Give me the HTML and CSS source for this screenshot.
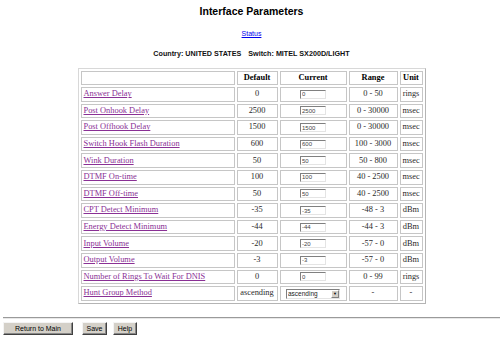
FILE: index.html
```html
<!DOCTYPE html>
<html lang="en">
<head>
  <meta charset="UTF-8">
  <title>Interface Parameters</title>
  <link rel="stylesheet" href="styles.css">
</head>
<body>

  <h1 class="titulo">Interface Parameters</h1>
  <p class="status"><a href="#">Status</a></p>
  <p class="pais"><span>Country: UNITED STATES</span><span class="switch">Switch: MITEL SX200D/LIGHT</span></p>

  <!-- Tabela de parametros -->
  <table class="params">
    <colgroup>
      <col class="c-nome"><col class="c-def"><col class="c-cur"><col class="c-range"><col class="c-unit">
    </colgroup>
    <tr class="cab">
      <td></td><th>Default</th><th>Current</th><th>Range</th><th>Unit</th>
    </tr>
    <tr><td class="nome"><a href="#">Answer Delay</a></td><td>0</td><td><input type="text" value="0"></td><td>0 - 50</td><td>rings</td></tr>
    <tr><td class="nome"><a href="#">Post Onhook Delay</a></td><td>2500</td><td><input type="text" value="2500"></td><td>0 - 30000</td><td>msec</td></tr>
    <tr><td class="nome"><a href="#">Post Offhook Delay</a></td><td>1500</td><td><input type="text" value="1500"></td><td>0 - 30000</td><td>msec</td></tr>
    <tr><td class="nome"><a href="#">Switch Hook Flash Duration</a></td><td>600</td><td><input type="text" value="600"></td><td>100 - 3000</td><td>msec</td></tr>
    <tr><td class="nome"><a href="#">Wink Duration</a></td><td>50</td><td><input type="text" value="50"></td><td>50 - 800</td><td>msec</td></tr>
    <tr><td class="nome"><a href="#">DTMF On-time</a></td><td>100</td><td><input type="text" value="100"></td><td>40 - 2500</td><td>msec</td></tr>
    <tr><td class="nome"><a href="#">DTMF Off-time</a></td><td>50</td><td><input type="text" value="50"></td><td>40 - 2500</td><td>msec</td></tr>
    <tr><td class="nome"><a href="#">CPT Detect Minimum</a></td><td>-35</td><td><input type="text" value="-35"></td><td>-48 - 3</td><td>dBm</td></tr>
    <tr><td class="nome"><a href="#">Energy Detect Minimum</a></td><td>-44</td><td><input type="text" value="-44"></td><td>-44 - 3</td><td>dBm</td></tr>
    <tr><td class="nome"><a href="#">Input Volume</a></td><td>-20</td><td><input type="text" value="-20"></td><td>-57 - 0</td><td>dBm</td></tr>
    <tr><td class="nome"><a href="#">Output Volume</a></td><td>-3</td><td><input type="text" value="-3"></td><td>-57 - 0</td><td>dBm</td></tr>
    <tr><td class="nome"><a href="#">Number of Rings To Wait For DNIS</a></td><td>0</td><td><input type="text" value="0"></td><td>0 - 99</td><td>rings</td></tr>
    <tr>
      <td class="nome"><a href="#">Hunt Group Method</a></td>
      <td>ascending</td>
      <td>
        <span class="combo"><select><option>ascending</option><option>descending</option></select><span class="seta">&#9660;</span></span>
      </td>
      <td>-</td><td>-</td>
    </tr>
  </table>

  <hr class="linha">

  <!-- Botoes -->
  <div class="botoes">
    <button class="btn-main">Return to Main</button>
    <button class="btn-save">Save</button>
    <button class="btn-help">Help</button>
  </div>

</body>
</html>
```

FILE: styles.css
```css
/* Reset basico */
* { box-sizing: border-box; }
body { margin: 0; font-family: "Liberation Sans", Arial, sans-serif; color: #000; background: #fff; }
.titulo { margin: 0; padding-top: 5px; font-size: 10.5px; line-height: 13px; text-align: center; }
.status { margin: 11px 0 0; font-size: 7px; line-height: 9px; text-align: center; }
.status a { color: #0000ee; }
.pais { margin: 11px 0 0; font-size: 7.2px; line-height: 9px; font-weight: bold; text-align: center; color: #111; }
.pais .switch { margin-left: 7px; }

.params { margin: 10px auto 0; width: 348px; table-layout: fixed; border-spacing: 2px; border: 1px solid #b4b4b4; border-top-color: #d8d8d8; border-left-color: #d8d8d8; font-family: "Liberation Serif", "Times New Roman", serif; font-size: 8.4px; color: #2a2a2a; }
.c-nome { width: 154px; } .c-def { width: 41px; } .c-cur { width: 67px; } .c-range { width: 49px; } .c-unit { width: 23px; }
.params td, .params th { border: 1px solid #c6c6c6; padding: 0 1px; height: 14.6px; line-height: 12px; text-align: center; white-space: nowrap; overflow: hidden; }
.params .cab td, .params .cab th { height: 13px; }
.params th { font-weight: bold; color: #000; }
.params td.nome { text-align: left; padding-left: 2px; }
.nome a { color: #8a3095; }
.params input { width: 26px; height: 9px; padding: 0 1px; font-family: "Liberation Sans", Arial, sans-serif; font-size: 6px; color: #444; vertical-align: middle; border: 1px solid #e4e4e4; border-top-color: #808080; border-left-color: #808080; }

.combo { display: inline-flex; align-items: stretch; width: 54px; height: 10px; vertical-align: middle; border: 1px solid #e4e4e4; border-top-color: #808080; border-left-color: #808080; background: #fff; }
.combo select { flex: 1; appearance: none; -webkit-appearance: none; border: 0; padding: 0 1px; margin: 0; background: transparent; font-family: "Liberation Sans", Arial, sans-serif; font-size: 6.5px; line-height: 8px; height: 8px; color: #222; }
.seta { width: 8px; display: flex; align-items: center; justify-content: center; background: #d4d0c8; border: 1px solid #808080; border-top-color: #fff; border-left-color: #fff; font-size: 4px; color: #000; }

.linha { margin: 13px 3px 0; border: 0; border-top: 1px solid #9a9a9a; border-bottom: 1px solid #e8e8e8; height: 0; }
.botoes { display: flex; align-items: center; padding: 3px 0 0 3px; }
.botoes button { height: 13px; padding: 0; margin-right: 6px; background: #d4d0c8; border: 1px solid #404040; border-top-color: #f4f4f4; border-left-color: #f4f4f4; box-shadow: inset -1px -1px 0 #888; font-family: "Liberation Sans", Arial, sans-serif; font-size: 7px; color: #000; cursor: pointer; }
.btn-main { width: 70px; margin-right: 9px !important; }
.btn-save { width: 25px; }
.btn-help { width: 24px; }
```
